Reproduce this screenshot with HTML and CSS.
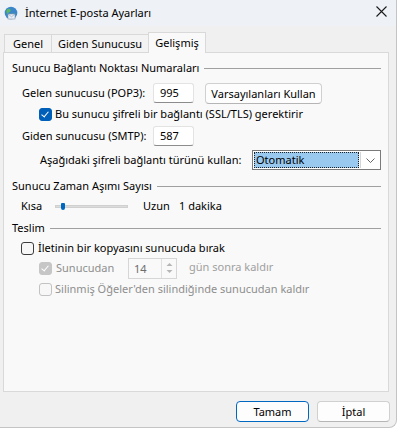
FILE: index.html
```html
<!DOCTYPE html>
<html>
<head>
  <meta charset="utf-8">
  <title>İnternet E-posta Ayarları</title>
  <link rel="stylesheet" href="styles.css">
</head>
<body>
  <div class="window">
    <!-- title bar -->
    <div class="titlebar">
      <svg class="appicon" width="14" height="14" viewBox="0 0 14 14">
        <circle cx="7" cy="7" r="6.3" fill="#3b86c9"/>
        <path d="M3 3.5 C5 2 7 3 6.5 5 C6 6.5 4 6 3.5 8 C2.5 7 2 5 3 3.5 Z" fill="#5cb85c"/>
        <path d="M8.5 7.5 C10 7 11.5 8.5 11 10.5 C10 12 8.5 11.5 8.5 10 Z" fill="#5cb85c"/>
        <rect x="4" y="8" width="7" height="5" fill="#e8eef6" stroke="#8a9bb0" stroke-width="0.6"/>
        <path d="M4 8 L7.5 10.8 L11 8" fill="none" stroke="#8a9bb0" stroke-width="0.6"/>
      </svg>
      <span class="title">İnternet E-posta Ayarları</span>
      <svg class="close" width="11" height="11" viewBox="0 0 11 11">
        <path d="M0.5 0.5 L10.5 10.5 M10.5 0.5 L0.5 10.5" stroke="#1a1a1a" stroke-width="1.1"/>
      </svg>
    </div>

    <!-- tabs -->
    <div class="tabs">
      <div class="tab t-gen">Genel</div>
      <div class="tab t-out">Giden Sunucusu</div>
      <div class="tab t-adv active">Gelişmiş</div>
    </div>

    <div class="panel">
      <div class="group">
        <span>Sunucu Bağlantı Noktası Numaraları</span><span class="rule"></span>
      </div>
      <div class="row r-pop">
        <span class="label lbl-port">Gelen sunucusu (POP3):</span>
        <span class="field port">995</span>
        <span class="btn defaults">Varsayılanları Kullan</span>
      </div>
      <div class="row r-ssl">
        <span class="check checked"></span>
        <span>Bu sunucu şifreli bir bağlantı (SSL/TLS) gerektirir</span>
      </div>
      <div class="row r-smtp">
        <span class="label lbl-port">Giden sunucusu (SMTP):</span>
        <span class="field port">587</span>
      </div>
      <div class="row r-enc">
        <span class="label lbl-enc">Aşağıdaki şifreli bağlantı türünü kullan:</span>
        <span class="select">
          <span class="sel-value">Otomatik</span>
          <span class="sel-arrow">
            <svg width="9" height="5" viewBox="0 0 9 5"><path d="M0.5 0.5 L4.5 4.5 L8.5 0.5" fill="none" stroke="#555" stroke-width="0.9"/></svg>
          </span>
        </span>
      </div>

      <div class="group g-time">
        <span>Sunucu Zaman Aşımı Sayısı</span><span class="rule"></span>
      </div>
      <div class="row r-slider">
        <span class="short">Kısa</span>
        <span class="track"><span class="thumb"></span></span>
        <span class="long">Uzun</span>
        <span>1 dakika</span>
      </div>

      <div class="group g-deliv">
        <span>Teslim</span><span class="rule"></span>
      </div>
      <div class="row r-keep">
        <span class="check"></span>
        <span>İletinin bir kopyasını sunucuda bırak</span>
      </div>
      <div class="row r-days disabled">
        <span class="check checked off"></span>
        <span class="lbl-days">Sunucudan</span>
        <span class="spinner">
          <span class="spin-value">14</span>
          <span class="spin-btns">
            <svg width="9" height="16" viewBox="0 0 9 16">
              <path d="M1.5 6 L4.5 3 L7.5 6 Z" fill="#b5b5b5"/>
              <path d="M1.5 10 L4.5 13 L7.5 10 Z" fill="#b5b5b5"/>
            </svg>
          </span>
        </span>
        <span class="after">gün sonra kaldır</span>
      </div>
      <div class="row r-deleted disabled">
        <span class="check off"></span>
        <span>Silinmiş Öğeler'den silindiğinde sunucudan kaldır</span>
      </div>
    </div>

    <div class="footer">
      <span class="btn ok">Tamam</span>
      <span class="btn">İptal</span>
    </div>
  </div>
</body>
</html>
```

FILE: styles.css
```css
body {
  margin: 0;
  background: #ffffff;
  font: 11px "Noto Sans", "DejaVu Sans", sans-serif;
  color: #000000;
}
.window {
  width: 397px;
  height: 428px;
  background: #f0f0f0;
  border-right: 1px solid #c4c4c4;
  border-bottom: 1px solid #c4c4c4;
  border-bottom-right-radius: 8px;
  box-sizing: border-box;
  overflow: hidden;
}

/* title bar */
.titlebar {
  height: 26px;
  background: #eef1f6;
  display: flex;
  align-items: center;
}
.appicon {
  margin: 0 7px 1px 4px;
}
.title {
  flex: 1;
  line-height: 16px;
}
.close {
  margin: 0 9px 4px 0;
}

/* tabs */
.tabs {
  display: flex;
  align-items: flex-end;
  height: 26px;
  padding-left: 4px;
}
.tab {
  height: 18px;
  line-height: 18px;
  box-sizing: border-box;
  text-align: center;
  background: #f3f3f3;
  border: 1px solid #d9d9d9;
  border-bottom: none;
  margin-right: -1px;
}
.t-gen {
  width: 48px;
}
.t-out {
  width: 98px;
}
.t-adv {
  width: 58px;
}
.tab.active {
  height: 21px;
  line-height: 20px;
  background: #f9f9f9;
  position: relative;
  z-index: 1;
  margin-bottom: -1px;
}

/* main panel */
.panel {
  margin: 0 7px 0 3px;
  height: 340px;
  box-sizing: border-box;
  background: #f9f9f9;
  border: 1px solid #d9d9d9;
  padding: 7px 7px 0 8px;
}
.group {
  display: flex;
  align-items: center;
  height: 16px;
  line-height: 16px;
  white-space: nowrap;
}
.rule {
  flex: 1;
  height: 1px;
  background: #a0a0a0;
  margin: 1px 0 0 5px;
}
.g-time {
  margin-top: 8px;
}
.g-deliv {
  margin-top: 6px;
}
.row {
  display: flex;
  align-items: center;
  line-height: 16px;
  white-space: nowrap;
}
.label {
  flex-shrink: 0;
  box-sizing: border-box;
}
.lbl-port {
  width: 141px;
  padding-left: 10px;
}
.lbl-enc {
  width: 240px;
  padding-left: 28px;
}
.r-pop {
  margin-top: 7px;
  height: 20px;
}
.r-ssl {
  margin-top: 4px;
  height: 14px;
  padding-left: 27px;
}
.r-smtp {
  margin-top: 5px;
  height: 20px;
}
.r-enc {
  margin-top: 4px;
  height: 20px;
}

.field {
  height: 20px;
  box-sizing: border-box;
  background: #ffffff;
  border: 1px solid #e3e3e3;
  border-bottom-color: #8c8c8c;
  border-radius: 3px;
  line-height: 18px;
  padding-left: 6px;
}
.port {
  width: 41px;
}
.btn {
  display: inline-block;
  height: 21px;
  box-sizing: border-box;
  background: #fdfdfd;
  border: 1px solid #d0d0d0;
  border-bottom-color: #b5b5b5;
  border-radius: 4px;
  line-height: 19px;
  text-align: center;
}
.defaults {
  margin-left: 11px;
  width: 117px;
}

.check {
  width: 13px;
  height: 13px;
  box-sizing: border-box;
  border: 1px solid #5e5e5e;
  border-radius: 3px;
  background: #f7f7f7;
  margin-right: 3px;
  flex-shrink: 0;
  position: relative;
}
.check.checked {
  background: #005fb8;
  border-color: #005fb8;
}
.check.checked::after {
  content: "";
  position: absolute;
  left: 3px;
  top: 1px;
  width: 3px;
  height: 6px;
  border: solid #ffffff;
  border-width: 0 1.5px 1.5px 0;
  transform: rotate(40deg);
}
.check.off {
  border-color: #c2c2c2;
  background: #f7f7f7;
}
.check.checked.off {
  background: #c6c6c6;
  border-color: #c6c6c6;
}

.select {
  display: flex;
  width: 129px;
  height: 20px;
  box-sizing: border-box;
  border: 1px solid #7a7a7a;
  background: #ffffff;
  padding: 1px;
}
.sel-value {
  flex: 1;
  background: #99c9ef;
  outline: 1px dotted #202020;
  outline-offset: -1px;
  line-height: 16px;
  padding-left: 2px;
}
.sel-arrow {
  width: 18px;
  display: flex;
  align-items: center;
  justify-content: center;
  border-left: 1px solid #d5d5d5;
  margin-left: 1px;
}

/* timeout slider */
.r-slider {
  margin-top: 4px;
  height: 16px;
  padding-left: 9px;
}
.short {
  width: 34px;
}
.track {
  position: relative;
  width: 73px;
  height: 3px;
  background: #dcdcdc;
  border: 1px solid #d0d0d0;
  box-sizing: border-box;
  margin-right: 15px;
}
.thumb {
  position: absolute;
  left: 5px;
  top: -3px;
  width: 4px;
  height: 7px;
  background: #0067c0;
  border-radius: 1px 1px 2px 2px;
}
.long {
  width: 36px;
}

/* delivery */
.r-keep {
  margin-top: 4px;
  height: 16px;
  padding-left: 9px;
}
.r-keep .check {
  border-color: #3c3c3c;
  margin-right: 4px;
}
.disabled {
  color: #8e8e8e;
}
.r-days {
  margin-top: 2px;
  height: 20px;
  padding-left: 27px;
}
.lbl-days {
  width: 72px;
  padding-left: 1px;
}
.spinner {
  display: flex;
  width: 49px;
  height: 21px;
  box-sizing: border-box;
  border: 1px solid #d6d6d6;
  background: #f9f9f9;
  margin-right: 12px;
}
.spin-value {
  flex: 1;
  line-height: 20px;
  padding-left: 5px;
  color: #6d6d6d;
}
.spin-btns {
  width: 14px;
  display: flex;
  align-items: center;
  justify-content: center;
  border-left: 1px solid #e0e0e0;
}
.after {
  color: #a0a0a0;
  margin-top: -2px;
}
.r-deleted {
  margin-top: 4px;
  height: 14px;
  padding-left: 27px;
}

/* bottom buttons */
.footer {
  display: flex;
  justify-content: flex-end;
  gap: 8px;
  padding: 9px 6px 0 0;
}
.footer .btn {
  width: 73px;
}
.footer .ok {
  border: 1px solid #0067c0;
}
```
